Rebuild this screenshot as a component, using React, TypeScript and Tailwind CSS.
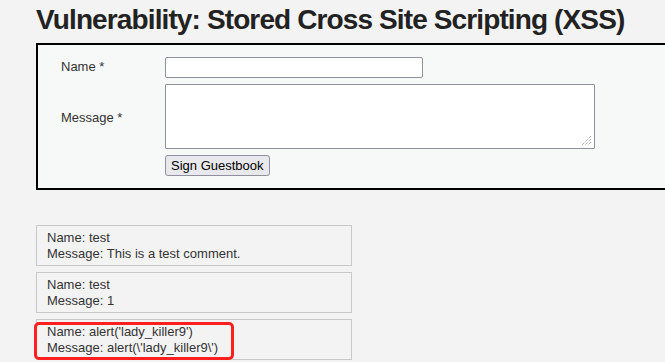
import React from "react";

export default function App() {
  const comments = [
    { name: "test", message: "This is a test comment." },
    { name: "test", message: "1" },
    { name: "alert('lady_killer9')", message: "alert(\\'lady_killer9\\')" },
  ];
  return (
    <div
      className="relative w-[665px] h-[362px] overflow-hidden bg-[#f3f3f3] text-[#333]"
      style={{ fontFamily: '"Liberation Sans", Arial, sans-serif' }}
    >
      <div className="pl-[36px]">
        <h1 className="h-[43px] pt-[3px] text-[28px] leading-[34px] font-bold tracking-[-0.88px] text-[#222] whitespace-nowrap">
          Vulnerability: Stored Cross Site Scripting (XSS)
        </h1>
        <div className="w-[700px] h-[147px] border-2 border-black bg-[#f7f8f8] pt-[12px] pl-[23px]">
          <div className="flex items-center h-[20px]">
            <span className="w-[104px] text-[13px]">Name *</span>
            <div className="w-[258px] h-[21px] bg-white border border-[#8f8f9d] rounded-[2px]" />
          </div>
          <div className="flex items-center mt-[7px] h-[65px]">
            <span className="w-[104px] text-[13px] pt-[2px]">Message *</span>
            <div className="relative w-[430px] h-[65px] bg-white border border-[#8f8f9d] rounded-[1px]">
              <svg className="absolute right-[2px] bottom-[2px]" width="11" height="11" viewBox="0 0 11 11">
                <path d="M10 1L1 10M10 4L4 10M10 7L7 10" stroke="#888" strokeWidth="1" strokeDasharray="1 1" />
              </svg>
            </div>
          </div>
          <div className="flex mt-[6px] pl-[104px]">
            <button className="h-[21px] px-[5px] text-[13px] leading-[18px] text-black bg-[#e9e9ed] border border-[#8f8f9d] rounded-[3px]">
              Sign Guestbook
            </button>
          </div>
        </div>
        <div className="mt-[35px] flex flex-col gap-[6px]">
          {comments.map((c, i) => (
            <div
              key={i}
              className="w-[316px] h-[41px] border border-[#c8c8c8] bg-[#f3f3f3] pl-[10px] pt-[4px] text-[13px] leading-[16px]"
            >
              <div>Name: {c.name}</div>
              <div>Message: {c.message}</div>
            </div>
          ))}
        </div>
      </div>
      <div className="absolute left-[34px] top-[322px] w-[200px] h-[38px] border-[3px] border-[#ff1f1f] rounded-[5px]" />
    </div>
  );
}
